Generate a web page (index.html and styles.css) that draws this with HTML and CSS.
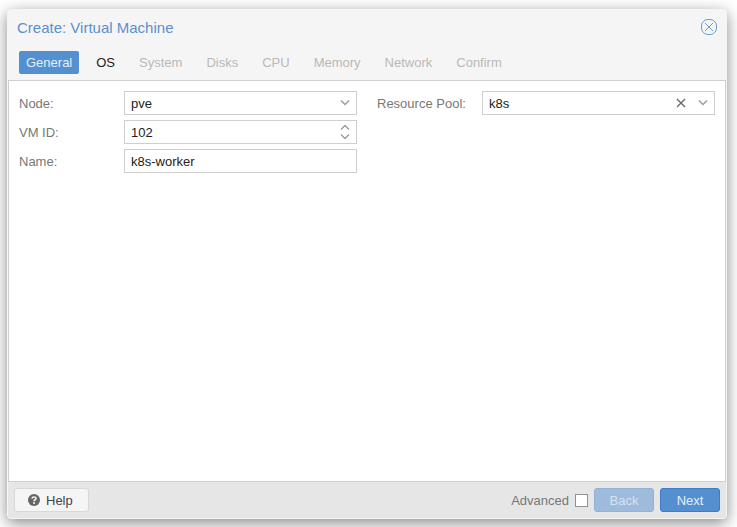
FILE: index.html
```html
<!DOCTYPE html>
<html lang="en">
<head>
  <meta charset="UTF-8">
  <title>Create: Virtual Machine</title>
  <link rel="stylesheet" href="styles.css">
</head>
<body>

  <form class="window" onsubmit="return false">
    <header class="window-header">
      <h1 class="title">Create: Virtual Machine</h1>
      <button type="button" class="close" aria-label="Close">
        <svg width="16" height="16" viewBox="0 0 16 16">
          <rect x="0.5" y="0.5" width="15" height="15" rx="6.5" />
          <path d="M4 4l8 8M12 4l-8 8" />
        </svg>
      </button>
    </header>

    <nav class="tabs">
      <button type="button" class="tab active">General</button>
      <button type="button" class="tab">OS</button>
      <button type="button" class="tab" disabled>System</button>
      <button type="button" class="tab" disabled>Disks</button>
      <button type="button" class="tab" disabled>CPU</button>
      <button type="button" class="tab" disabled>Memory</button>
      <button type="button" class="tab" disabled>Network</button>
      <button type="button" class="tab" disabled>Confirm</button>
    </nav>

    <main class="panel">
      <div class="column">
        <div class="row">
          <label for="node">Node:</label>
          <div class="field">
            <select id="node"><option>pve</option></select>
            <svg class="trigger" width="22" height="22" viewBox="0 0 22 22"><path d="M7 8.500l4 4 4-4" /></svg>
          </div>
        </div>
        <div class="row">
          <label for="vmid">VM ID:</label>
          <div class="field">
            <input type="number" id="vmid" value="102">
            <svg class="trigger" width="22" height="22" viewBox="0 0 22 22"><path d="M7 8.500l4-4 4 4M7 13.500l4 4 4-4" /></svg>
          </div>
        </div>
        <div class="row">
          <label for="name">Name:</label>
          <div class="field">
            <input type="text" id="name" value="k8s-worker">
          </div>
        </div>
      </div>

      <div class="column">
        <div class="row">
          <label for="pool">Resource Pool:</label>
          <div class="field">
            <select id="pool"><option>k8s</option></select>
            <button type="button" class="clear" aria-label="Clear">
              <svg width="22" height="22" viewBox="0 0 22 22"><path d="M7 7l8 8M15 7l-8 8" /></svg>
            </button>
            <svg class="trigger" width="22" height="22" viewBox="0 0 22 22"><path d="M7 8.500l4 4 4-4" /></svg>
          </div>
        </div>
      </div>
    </main>

    <footer class="toolbar">
      <button type="button" class="btn help">
        <svg width="12" height="12" viewBox="0 0 12 12">
          <circle cx="6" cy="6" r="6" />
          <path d="M4 4.600C4.200 2.400 8 2.400 8 4.500C8 5.800 6.100 5.700 6.100 7.200" />
          <rect x="5.200" y="8.200" width="1.800" height="1.700" />
        </svg>
        Help
      </button>
      <label class="advanced" for="advanced">Advanced</label>
      <input type="checkbox" id="advanced" class="check">
      <button type="button" class="btn primary" disabled>Back</button>
      <button type="submit" class="btn primary">Next</button>
    </footer>
  </form>

</body>
</html>
```

FILE: styles.css
```css
* {
  box-sizing: border-box;
}
body {
  margin: 0;
  min-height: 100vh;
  padding: 9px 10px 8px 7px;
  display: flex;
  background: #fff;
}
body, button, input, select {
  font-family: "Liberation Sans", Arial, sans-serif;
  font-size: 13px;
}
button {
  border: none;
  padding: 0;
  background: none;
  cursor: pointer;
}
button:disabled {
  cursor: default;
}
svg {
  display: block;
  fill: none;
}
.window {
  flex: 1;
  display: flex;
  flex-direction: column;
  border: 1px solid #f5f5f5;
  border-radius: 4px;
  background: #f5f5f5;
  box-shadow: 0 4px 15px #888;
}

/* header */
.window-header {
  display: flex;
  align-items: center;
  justify-content: space-between;
  height: 34px;
  padding: 0 9px;
}
.title {
  margin: 0;
  font-size: 15px;
  font-weight: normal;
  color: #5b90cd;
}
.close svg {
  stroke: #6c9bd2;
}
.tabs {
  display: flex;
  gap: 10px;
  padding: 7px 11px 6px;
}
.tab {
  height: 23px;
  padding: 0 7px;
  border-radius: 2px;
  color: #222;
}
.tab:disabled {
  color: #b9b9b9;
}
.tab.active {
  background: #5490d0;
  color: #e6effa;
}

/* form */
.panel {
  flex: 1;
  display: flex;
  gap: 20px;
  padding: 10px;
  border: 1px solid #cfcfcf;
  background: #fff;
}
.column {
  flex: 1;
  display: flex;
  flex-direction: column;
  gap: 5px;
}
.row {
  display: flex;
  align-items: center;
}
.row label {
  width: 105px;
  color: #777;
}
.field {
  flex: 1;
  display: flex;
  height: 24px;
  border: 1px solid #cfcfcf;
  background: #fff;
}
.field input, .field select {
  flex: 1;
  min-width: 0;
  padding: 0 6px;
  border: none;
  outline: none;
  background: transparent;
  color: #222;
  appearance: none;
}
.field input[type="number"] {
  appearance: textfield;
}
.trigger {
  stroke: #999;
  stroke-width: 1.3;
}
.clear svg {
  stroke: #666;
  stroke-width: 1.3;
}

/* footer */
.toolbar {
  display: flex;
  align-items: center;
  gap: 6px;
  padding: 6px;
  border-radius: 0 0 3px 3px;
  background: #e6e6e6;
}
.btn {
  display: flex;
  align-items: center;
  justify-content: center;
  height: 24px;
  border: 1px solid #d8d8d8;
  border-radius: 3px;
}
.help {
  gap: 6px;
  margin-right: auto;
  padding: 0 15px 0 13px;
  background: #f5f5f5;
  color: #444;
}
.help circle {
  fill: #666;
}
.help path {
  stroke: #f5f5f5;
  stroke-width: 1.6;
}
.help rect {
  fill: #f5f5f5;
}
.advanced {
  color: #777;
}
.check {
  width: 13px;
  height: 13px;
  margin: 0;
  border: 1px solid #919191;
  background: #fff;
  appearance: none;
}
.check:checked {
  background: #5490d0;
}
.primary {
  width: 60px;
  border-color: #3d7dc6;
  background: #5490d0;
  color: #e6effa;
}
.primary:disabled {
  border-color: #93b4da;
  background: #9ebbdb;
  color: #d5e2f0;
}
```
